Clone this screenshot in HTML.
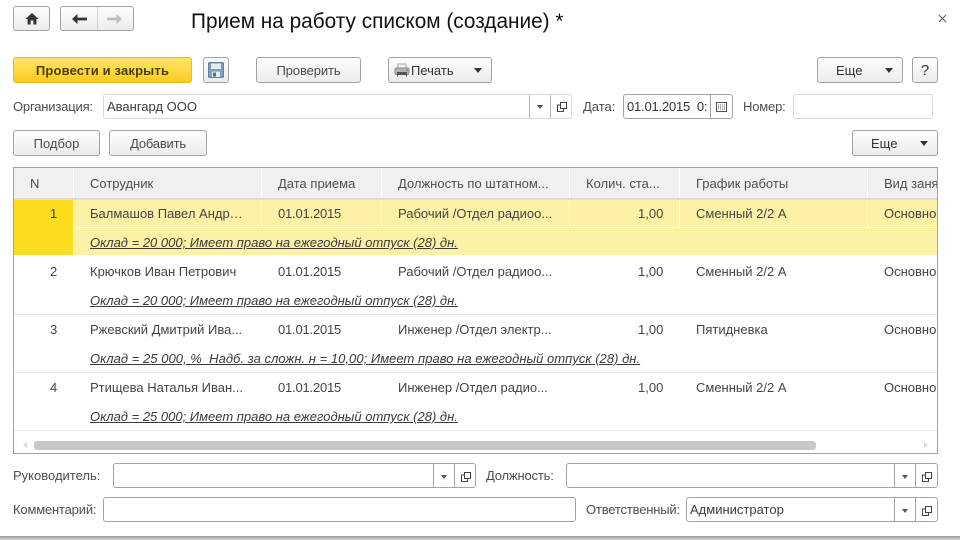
<!DOCTYPE html>
<html lang="ru"><head><meta charset="utf-8"><title>Прием на работу списком</title>
<style>
html,body{margin:0;padding:0;background:#fff}
#p{position:relative;width:960px;height:540px;overflow:hidden;background:#fff;font:13px/16px "Liberation Sans",Arial,sans-serif;color:#4a4a4a}
#p div,#p span,#p svg{position:absolute}
.t{white-space:nowrap}
.b{box-sizing:border-box;border:1px solid #a3a3a3;border-radius:3px;background:linear-gradient(#fdfdfd,#ececec);text-align:center;height:26px;line-height:25px;white-space:nowrap}
.f{box-sizing:border-box;border:1px solid #a3a3a3;border-radius:3px;background:#fff;height:25px}
.l{color:#4e4e4e;margin-top:1px}
.n{letter-spacing:-.18px}
.c{color:#444;margin-top:1px}
.d{letter-spacing:-.2px}
.u{color:#3a3a3a;font-style:italic;text-decoration:underline;margin-top:1px}
.h{background:#f0f0f0;top:168px;height:30px}
.ht{top:175px;color:#4e4e4e;margin-top:1px}
.s{margin-top:1px}
</style></head><body><div id="p">

<div class="b" style="left:13px;top:6px;width:37px;height:25px"></div>
<svg style="left:24px;top:12px" width="16" height="13" viewBox="0 0 16 13"><path d="M8 1 L1.5 7 H3.6 V12.5 H6.6 V8.5 H9.4 V12.5 H12.4 V7 H14.5 Z" fill="#333"/></svg>
<div class="b" style="left:60px;top:6px;width:74px;height:25px"></div>
<div style="left:97px;top:7px;width:1px;height:23px;background:#d0d0d0"></div>
<svg style="left:72px;top:14px" width="15" height="10" viewBox="0 0 15 10"><path d="M0 5 L5.5 0 V3.6 H15 V6.4 H5.5 V10 Z" fill="#333"/></svg>
<svg style="left:107px;top:14px" width="15" height="10" viewBox="0 0 15 10"><path d="M15 5 L9.5 0 V3.6 H0 V6.4 H9.5 V10 Z" fill="#bdbdbd"/></svg>

<div class="t s" style="left:191px;top:9px;font-size:20.8px;line-height:24px;color:#111">Прием на работу списком (создание) *</div>
<svg style="left:938px;top:14px" width="9" height="9" viewBox="0 0 9 9"><path d="M1 1 L8 8 M8 1 L1 8" stroke="#555" stroke-width="1"/></svg>

<div class="b" style="left:13px;top:57px;width:179px;border:1px solid #eeb91e;background:linear-gradient(#fde768,#fcca20);color:#4a3d10;font-weight:bold;letter-spacing:.16px">Провести и закрыть</div>
<div class="b" style="left:203px;top:57px;width:26px"></div>
<svg style="left:208px;top:62px" width="16" height="16" viewBox="0 0 16 16"><rect x=".5" y=".5" width="15" height="15" rx="1" fill="#7d9fbd" stroke="#5f82a2"/><rect x="3" y="1.5" width="10" height="5.5" fill="#e3ebf2"/><rect x="4" y="9.5" width="8" height="5.5" fill="#e9e9e9"/><rect x="5" y="10.5" width="3" height="4" fill="#5d6c7a"/></svg>
<div class="b" style="left:256px;top:57px;width:105px;letter-spacing:-.1px">Проверить</div>
<div class="b" style="left:388px;top:57px;width:104px"></div>
<svg style="left:394px;top:63px" width="16" height="15" viewBox="0 0 16 15"><rect x="4" y="1" width="8" height="5" fill="#f2f2f2" stroke="#a5a5a5"/><rect x="1" y="5" width="14" height="6.5" rx="1.5" fill="#b4b4b4" stroke="#8d8d8d"/><rect x="3" y="9" width="10" height="4.5" fill="#555"/><rect x="4" y="12" width="8" height="2.5" fill="#e6e6e6"/><rect x="12" y="6.5" width="2" height="1.2" fill="#d9534f"/></svg>
<div class="t s" style="left:411px;top:62px;color:#333">Печать</div>
<svg style="left:474px;top:68px" width="8" height="5" viewBox="0 0 8 5"><path d="M0 0H8L4 5Z" fill="#333"/></svg>

<div class="b" style="left:817px;top:57px;width:86px"></div>
<div class="t s" style="left:836px;top:62px;color:#333">Еще</div>
<svg style="left:885px;top:68px" width="8" height="5" viewBox="0 0 8 5"><path d="M0 0H8L4 5Z" fill="#333"/></svg>
<div class="b" style="left:912px;top:57px;width:26px;font-size:15px;color:#333">?</div>

<div class="t l n" style="left:13px;top:98px">Организация:</div>
<div class="f" style="left:103px;top:94px;width:469px;border:1px solid #d8d8d8"></div>
<div style="left:529px;top:95px;width:1px;height:23px;background:#b3b3b3"></div>
<div style="left:550px;top:95px;width:1px;height:23px;background:#b3b3b3"></div>
<div class="t s" style="left:107px;top:98px;color:#3c3c3c">Авангард ООО</div>
<svg style="left:537px;top:105px" width="6" height="4" viewBox="0 0 6 4"><path d="M0 0H6L3 4Z" fill="#555"/></svg>
<svg style="left:557px;top:102px" width="10" height="10" viewBox="0 0 10 10"><path d="M3.5 .5H9.5V6.5H3.5Z M3.5 3H.5V9.5H6.5V6.5" fill="none" stroke="#444"/></svg>

<div class="t l" style="left:583px;top:98px">Дата:</div>
<div class="f" style="left:623px;top:94px;width:110px"></div>
<div style="left:710px;top:95px;width:1px;height:23px;background:#a3a3a3"></div>
<div class="t s d" style="left:627px;top:98px;width:82px;overflow:hidden;color:#333">01.01.2015&nbsp; 0:</div>
<svg style="left:716px;top:102px" width="12" height="11" viewBox="0 0 12 11"><rect x=".5" y=".5" width="10" height="9" fill="none" stroke="#555"/><path d="M2 3h8M2 5h8M2 7h8" stroke="#666" stroke-dasharray="1 1"/></svg>

<div class="t l n" style="left:743px;top:98px">Номер:</div>
<div class="f" style="left:793px;top:94px;width:140px;border:1px solid #d8d8d8"></div>

<div class="b" style="left:13px;top:130px;width:87px">Подбор</div>
<div class="b" style="left:109px;top:130px;width:98px;letter-spacing:-.2px">Добавить</div>
<div class="b" style="left:852px;top:130px;width:86px"></div>
<div class="t s" style="left:871px;top:135px;color:#333">Еще</div>
<svg style="left:920px;top:141px" width="8" height="5" viewBox="0 0 8 5"><path d="M0 0H8L4 5Z" fill="#333"/></svg>

<!-- table -->
<div style="left:13px;top:167px;width:925px;height:287px;box-sizing:border-box;border:1px solid #a3a3a3;background:#fff"></div>
<div class="h" style="left:14px;width:59px"></div>
<div class="h" style="left:74px;width:187px"></div>
<div class="h" style="left:262px;width:119px"></div>
<div class="h" style="left:382px;width:187px"></div>
<div class="h" style="left:570px;width:109px"></div>
<div class="h" style="left:680px;width:187px"></div>
<div class="h" style="left:868px;width:69px"></div>
<div style="left:14px;top:198px;width:923px;height:2px;background:#dcdcdc"></div>

<div class="t ht" style="left:30px">N</div>
<div class="t ht" style="left:90px">Сотрудник</div>
<div class="t ht" style="left:278px">Дата приема</div>
<div class="t ht" style="left:398px">Должность по штатном...</div>
<div class="t ht" style="left:586px">Колич. ста...</div>
<div class="t ht" style="left:696px">График работы</div>
<div class="t ht" style="left:884px;width:53px;overflow:hidden">Вид заня</div>

<div style="left:14px;top:200px;width:923px;height:55px;background:#fdf1a5"></div>
<div style="left:14px;top:200px;width:59px;height:55px;background:#fddb1d"></div>
<div style="left:74px;top:227px;width:863px;height:1px;background:#fff"></div>
<div style="left:261px;top:200px;width:1px;height:27px;background:#fff"></div>
<div style="left:381px;top:200px;width:1px;height:27px;background:#fff"></div>
<div style="left:569px;top:200px;width:1px;height:27px;background:#fff"></div>
<div style="left:679px;top:200px;width:1px;height:27px;background:#fff"></div>
<div style="left:867px;top:200px;width:1px;height:27px;background:#fff"></div>
<div style="left:73px;top:200px;width:1px;height:55px;background:#fff"></div>

<div style="left:14px;top:314px;width:923px;height:1px;background:#e6e6e6"></div>
<div style="left:14px;top:372px;width:923px;height:1px;background:#e6e6e6"></div>
<div style="left:14px;top:430px;width:923px;height:1px;background:#e6e6e6"></div>

<!-- row 1 -->
<div class="t c" style="left:50px;top:205px">1</div>
<div class="t c" style="left:90px;top:205px">Балмашов Павел Андр…</div>
<div class="t c d" style="left:278px;top:205px">01.01.2015</div>
<div class="t c" style="left:398px;top:205px">Рабочий /Отдел радиоо...</div>
<div class="t c" style="left:638px;top:205px">1,00</div>
<div class="t c" style="left:696px;top:205px">Сменный 2/2 А</div>
<div class="t c" style="left:884px;top:205px;width:53px;overflow:hidden">Основно</div>
<div class="t u" style="left:90px;top:234px">Оклад = 20 000; Имеет право на ежегодный отпуск (28) дн.</div>
<!-- row 2 -->
<div class="t c" style="left:50px;top:263px">2</div>
<div class="t c" style="left:90px;top:263px">Крючков Иван Петрович</div>
<div class="t c d" style="left:278px;top:263px">01.01.2015</div>
<div class="t c" style="left:398px;top:263px">Рабочий /Отдел радиоо...</div>
<div class="t c" style="left:638px;top:263px">1,00</div>
<div class="t c" style="left:696px;top:263px">Сменный 2/2 А</div>
<div class="t c" style="left:884px;top:263px;width:53px;overflow:hidden">Основно</div>
<div class="t u" style="left:90px;top:292px">Оклад = 20 000; Имеет право на ежегодный отпуск (28) дн.</div>
<!-- row 3 -->
<div class="t c" style="left:50px;top:321px">3</div>
<div class="t c" style="left:90px;top:321px">Ржевский Дмитрий Ива...</div>
<div class="t c d" style="left:278px;top:321px">01.01.2015</div>
<div class="t c" style="left:398px;top:321px">Инженер /Отдел электр...</div>
<div class="t c" style="left:638px;top:321px">1,00</div>
<div class="t c" style="left:696px;top:321px">Пятидневка</div>
<div class="t c" style="left:884px;top:321px;width:53px;overflow:hidden">Основно</div>
<div class="t u" style="left:90px;top:350px;letter-spacing:.03px">Оклад = 25 000, %&nbsp; Надб. за сложн. н = 10,00; Имеет право на ежегодный отпуск (28) дн.</div>
<!-- row 4 -->
<div class="t c" style="left:50px;top:379px">4</div>
<div class="t c" style="left:90px;top:379px">Ртищева Наталья Иван...</div>
<div class="t c d" style="left:278px;top:379px">01.01.2015</div>
<div class="t c" style="left:398px;top:379px">Инженер /Отдел радио...</div>
<div class="t c" style="left:638px;top:379px">1,00</div>
<div class="t c" style="left:696px;top:379px">Сменный 2/2 А</div>
<div class="t c" style="left:884px;top:379px;width:53px;overflow:hidden">Основно</div>
<div class="t u" style="left:90px;top:408px">Оклад = 25 000; Имеет право на ежегодный отпуск (28) дн.</div>

<!-- scrollbar -->
<div style="left:34px;top:441px;width:782px;height:9px;border-radius:3px;background:#c8c8c8"></div>
<svg style="left:23px;top:442px" width="4" height="6" viewBox="0 0 4 6"><path d="M4 0V6L0 3Z" fill="#d8d8d8"/></svg>
<svg style="left:924px;top:442px" width="4" height="6" viewBox="0 0 4 6"><path d="M0 0V6L4 3Z" fill="#d8d8d8"/></svg>

<!-- bottom -->
<div class="t l" style="left:13px;top:467px">Руководитель:</div>
<div class="f" style="left:113px;top:463px;width:363px"></div>
<div style="left:433px;top:464px;width:1px;height:23px;background:#a3a3a3"></div>
<div style="left:454px;top:464px;width:1px;height:23px;background:#a3a3a3"></div>
<svg style="left:441px;top:475px" width="6" height="4" viewBox="0 0 6 4"><path d="M0 0H6L3 4Z" fill="#555"/></svg>
<svg style="left:461px;top:472px" width="10" height="10" viewBox="0 0 10 10"><path d="M3.5 .5H9.5V6.5H3.5Z M3.5 3H.5V9.5H6.5V6.5" fill="none" stroke="#444"/></svg>

<div class="t l n" style="left:486px;top:467px">Должность:</div>
<div class="f" style="left:566px;top:463px;width:372px"></div>
<div style="left:894px;top:464px;width:1px;height:23px;background:#a3a3a3"></div>
<div style="left:915px;top:464px;width:1px;height:23px;background:#a3a3a3"></div>
<svg style="left:902px;top:475px" width="6" height="4" viewBox="0 0 6 4"><path d="M0 0H6L3 4Z" fill="#555"/></svg>
<svg style="left:922px;top:472px" width="10" height="10" viewBox="0 0 10 10"><path d="M3.5 .5H9.5V6.5H3.5Z M3.5 3H.5V9.5H6.5V6.5" fill="none" stroke="#444"/></svg>

<div class="t l n" style="left:13px;top:501px">Комментарий:</div>
<div class="f" style="left:103px;top:497px;width:473px"></div>

<div class="t l n" style="left:586px;top:501px">Ответственный:</div>
<div class="f" style="left:686px;top:497px;width:252px"></div>
<div style="left:894px;top:498px;width:1px;height:23px;background:#a3a3a3"></div>
<div style="left:915px;top:498px;width:1px;height:23px;background:#a3a3a3"></div>
<div class="t s" style="left:690px;top:501px;color:#3c3c3c">Администратор</div>
<svg style="left:902px;top:509px" width="6" height="4" viewBox="0 0 6 4"><path d="M0 0H6L3 4Z" fill="#555"/></svg>
<svg style="left:922px;top:506px" width="10" height="10" viewBox="0 0 10 10"><path d="M3.5 .5H9.5V6.5H3.5Z M3.5 3H.5V9.5H6.5V6.5" fill="none" stroke="#444"/></svg>

<div style="left:0;top:536px;width:960px;height:4px;background:linear-gradient(#9a9a9a,#d8d8d8)"></div>
</div></body></html>
